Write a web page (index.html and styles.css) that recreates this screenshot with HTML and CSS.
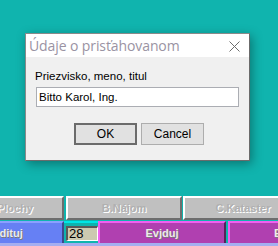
FILE: index.html
```html
<!DOCTYPE html>
<html>
<head>
<meta charset="utf-8">
<link rel="stylesheet" href="styles.css">
</head>
<body>
<div class="screen">
  <div class="toolbar">
    <div class="row row1">
      <div class="gbtn w-a">A.Plochy</div>
      <div class="gbtn w-b">B.Nájom</div>
      <div class="gbtn w-c">C.Kataster</div>
    </div>
    <div class="row row2">
      <div class="cbtn blue">Edituj</div>
      <div class="numcell"><div class="num">28</div></div>
      <div class="cbtn mag w-ev">Evjduj</div>
      <div class="cbtn mag w-last">Eviduj</div>
    </div>
    <div class="strip"></div>
  </div>

  <div class="dialog">
    <div class="titlebar">
      <span class="title">Údaje o prisťahovanom</span>
      <svg class="close" width="11" height="11" viewBox="0 0 11 11"><path d="M0.5 0.5 L10.5 10.5 M10.5 0.5 L0.5 10.5" stroke="#6d6d6d" stroke-width="1" fill="none"/></svg>
    </div>
    <div class="dbody">
      <div class="label">Priezvisko, meno, titul</div>
      <div class="input">Bitto Karol, Ing.</div>
      <div class="buttons">
        <div class="btn default">OK</div>
        <div class="btn">Cancel</div>
      </div>
    </div>
  </div>
</div>
</body>
</html>
```

FILE: styles.css
```css
html, body {
  margin: 0;
  padding: 0;
}
body {
  width: 278px;
  height: 246px;
  overflow: hidden;
  background: #10b4ae;
}
.screen {
  position: relative;
  width: 278px;
  height: 246px;
  display: flex;
  flex-direction: column;
  justify-content: flex-end;
  overflow: hidden;
}
.toolbar {
  display: flex;
  flex-direction: column;
}
.row {
  display: flex;
  height: 24px;
}
.row1 {
  margin-left: -45px;
  gap: 2px;
  height: 25px;
}
.gbtn {
  box-sizing: border-box;
  height: 24px;
  background: #c0c0c0;
  border-top: 2px solid #ffffff;
  border-left: 2px solid #ffffff;
  border-right: 2px solid #6e6e6e;
  border-bottom: 2px solid #6e6e6e;
  font: bold 11px "Liberation Sans", Arial, sans-serif;
  color: #b0b0b0;
  text-shadow: 1px 1px 0 #ffffff;
  display: flex;
  align-items: center;
  justify-content: center;
  flex: none;
}
.w-a { width: 109px; }
.w-b { width: 116px; }
.w-c { width: 120px; margin-left: -1px; }
.row2 {
  height: 22px;
  margin-left: -47px;
}
.cbtn {
  box-sizing: border-box;
  height: 22px;
  font: bold 11px "Liberation Sans", Arial, sans-serif;
  color: #ececec;
  text-shadow: 1px 1px 0 #7a7a7a;
  display: flex;
  align-items: center;
  justify-content: center;
  flex: none;
}
.blue {
  width: 111px;
  background: #6680f4;
  border-top: 2px solid #8aa0ff;
  border-right: 2px solid #3c4a8c;
}
.numcell {
  width: 37px;
  box-sizing: border-box;
  border-top: 2px solid #00e6e6;
  display: flex;
  align-items: center;
  padding-left: 2px;
}
.num {
  box-sizing: border-box;
  width: 32px;
  height: 15px;
  background: #cccab0;
  border-top: 2px solid #5a5a5a;
  border-left: 2px solid #5a5a5a;
  border-bottom: 1px solid #ffffff;
  border-right: 1px solid #ffffff;
  font: 13px "Liberation Sans", Arial, sans-serif;
  color: #000;
  line-height: 12px;
  padding-left: 1px;
}
.mag {
  background: #b040b0;
  border-top: 2px solid #f060f0;
  border-left: 2px solid #f060f0;
  border-right: 2px solid #5a205a;
}
.w-ev { width: 128px; }
.w-last { width: 100px; margin-left: 2px; justify-content: flex-start; padding-left: 44px; }
.strip {
  height: 3px;
  background: #a4aef0;
}

.dialog {
  position: absolute;
  left: 25px;
  top: 33px;
  width: 225px;
  height: 128px;
  box-sizing: border-box;
  border: 1px solid #6b6b6b;
  border-top-color: #8a8a8a;
  border-left-color: #8a8a8a;
  background: #f0f0f0;
  box-shadow: 2px 3px 10px rgba(0,0,0,0.35);
  display: flex;
  flex-direction: column;
}
.titlebar {
  height: 23px;
  background: #ffffff;
  display: flex;
  align-items: center;
  justify-content: space-between;
  padding: 0 9px 0 3px;
}
.title {
  font: 14px "Open Sans", "Noto Sans", sans-serif;
  color: #9a93a3;
  letter-spacing: -0.1px;
}
.close {
  display: block;
  margin-top: 1px;
}
.dbody {
  flex: 1;
  display: flex;
  flex-direction: column;
  padding: 13px 10px 0 9px;
}
.label {
  font: 11.5px "Liberation Sans", Arial, sans-serif;
  color: #000;
  line-height: 13px;
}
.input {
  margin-top: 4px;
  margin-left: 1px;
  height: 20px;
  box-sizing: border-box;
  background: #ffffff;
  border: 1px solid #abadb3;
  font: 11.5px "Liberation Sans", Arial, sans-serif;
  color: #000;
  line-height: 18px;
  padding-left: 2px;
}
.buttons {
  display: flex;
  gap: 4px;
  margin-top: 16px;
  padding-left: 39px;
}
.btn {
  width: 63px;
  height: 22px;
  box-sizing: border-box;
  background: #e1e1e1;
  border: 1px solid #adadad;
  font: 12px "Liberation Sans", Arial, sans-serif;
  color: #000;
  display: flex;
  align-items: center;
  justify-content: center;
}
.btn.default {
  border: 2px solid #6b6b6b;
  box-shadow: inset 0 0 0 1px #e1e1e1;
}
```
